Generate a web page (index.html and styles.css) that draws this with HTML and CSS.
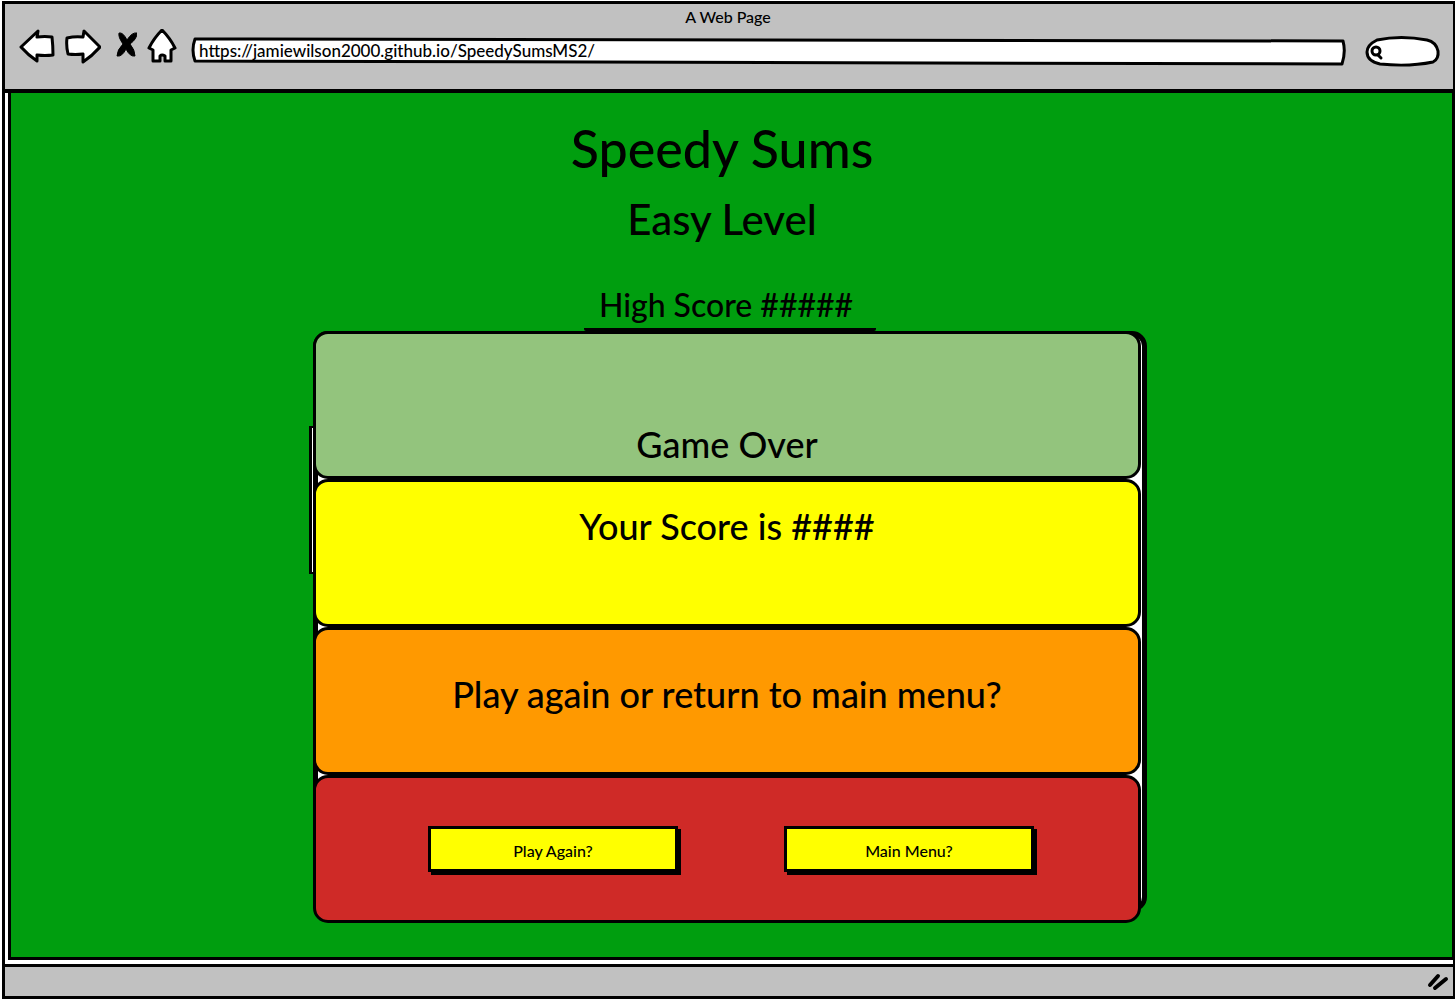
FILE: index.html
```html
<!DOCTYPE html>
<html lang="en">
<head>
<meta charset="utf-8">
<meta name="viewport" content="width=device-width, initial-scale=1">
<title>A Web Page</title>
<link rel="stylesheet" href="styles.css">
</head>
<body>
<div class="window">
  <header class="chrome">
    <div class="chrome-title">A Web Page</div>
    <div class="toolbar">
      <nav class="nav" aria-label="Browser">
        <button class="tool" type="button" aria-label="Back"><svg width="36" height="36" viewBox="0 0 36 36"><path class="ink" d="M2 18 19 2 18 8Q26 7 33 8Q34 17 34 26Q26 27 18 26L18 32Q9 26 2 18Z"/></svg></button>
        <button class="tool" type="button" aria-label="Forward"><svg width="36" height="36" viewBox="0 0 36 36"><path class="ink" d="M35 18 19 2 18 8Q10 7 2 9Q1 17 3 25Q10 26 18 25L18 33Q27 27 35 18Z"/></svg></button>
        <button class="tool tool-stop" type="button" aria-label="Stop"><svg width="22" height="36" viewBox="0 0 22 36"><path d="M4 4Q8 3 12 11Q17 3 22 4Q22 10 15 15Q20 21 20 27Q15 28 11 20Q7 28 2 27Q2 21 8 15Q3 8 4 4Z" stroke="#000" stroke-linejoin="round"/></svg></button>
        <button class="tool" type="button" aria-label="Home"><svg width="30" height="36" viewBox="0 0 30 36"><path class="ink" d="M15 1Q23 9 28 19L24 21 24 32 18 32 18 27Q15 25 13 27L13 32 6 32 6 21 2 19Q7 9 15 1Z"/></svg></button>
      </nav>
      <label class="field address">
        <svg class="field-shape" viewBox="0 0 1154 28" preserveAspectRatio="none" aria-hidden="true"><path class="ink" d="M4 2Q500 1 1152 4Q1155 15 1151 27Q500 26 4 24Q0 13 4 2Z"/></svg>
        <input class="field-input" type="text" aria-label="Address" value="https://jamiewilson2000.github.io/SpeedySumsMS2/">
      </label>
      <label class="field search">
        <svg class="field-shape" viewBox="0 0 74 30" preserveAspectRatio="none" aria-hidden="true"><path class="ink" d="M12 4Q36 -1 62 4Q71 6 73 15Q74 23 68 26Q44 31 15 28Q2 25 2 16Q2 9 12 4Z"/></svg>
        <svg class="search-icon" width="14" height="16" viewBox="0 0 14 16" aria-hidden="true"><circle class="ink" cx="6" cy="6" r="4"/><path class="ink" d="M8 10 11 13"/></svg>
        <input class="field-input" type="search" aria-label="Search">
      </label>
    </div>
  </header>

  <main class="page">
    <div class="headings">
      <h1 class="title">Speedy Sums</h1>
      <h2 class="level">Easy Level</h2>
      <p class="high-score">High Score #####</p>
    </div>
    <div class="board">
      <section class="card card-over"><p>Game Over</p></section>
      <section class="card card-score"><p>Your Score is ####</p></section>
      <section class="card card-prompt"><p>Play again or return to main menu?</p></section>
      <section class="card card-actions">
        <button class="action" type="button">Play Again?</button>
        <button class="action" type="button">Main Menu?</button>
      </section>
    </div>
  </main>

  <footer class="status">
    <svg class="grip" width="22" height="18" viewBox="0 0 22 18" aria-hidden="true"><path d="M3 12 11 3M8 15 19 6"/></svg>
  </footer>
</div>
</body>
</html>
```
FILE: styles.css
```css
*, *::before, *::after { box-sizing: border-box; }

body {
  margin: 0;
  background: #fff;
  color: #000;
  font-family: Lato, "Liberation Sans", sans-serif;
  font-weight: 500;
}

h1, h2, p { margin: 0; font-weight: 500; }

.window {
  display: flex;
  flex-direction: column;
  min-height: calc(100vh - 3px);
  margin: 1px 0 2px 2px;
  border: 3px solid #000;
  border-right-width: 2px;
}

/* Browser chrome */
.chrome {
  height: 89px;
  padding-right: 14px;
  background: #c1c1c1;
  border-bottom: 4px solid #000;
}

.chrome-title {
  height: 24px;
  padding-left: 12px;
  font-size: 16px;
  line-height: 26px;
  text-align: center;
}

.toolbar {
  display: flex;
  align-items: center;
  gap: 20px;
  height: 38px;
  padding-left: 14px;
}

.nav { display: flex; gap: 10px; width: 156px; }

.tool {
  display: flex;
  padding: 0;
  border: 0;
  background: none;
}

.tool-stop { margin-left: 4px; }

.ink {
  fill: #fff;
  stroke: #000;
  stroke-width: 3px;
  stroke-linejoin: round;
  stroke-linecap: round;
  vector-effect: non-scaling-stroke;
}

.field { position: relative; display: flex; margin-top: 8px; }
.nav + .field { margin-left: -4px; }
.address { flex: 1; height: 28px; }
.search { width: 74px; height: 30px; }

.field-shape {
  position: absolute;
  inset: 0;
  width: 100%;
  height: 100%;
  overflow: visible;
}

.search-icon { position: absolute; left: 5px; top: 9px; }

.field-input {
  position: relative;
  width: 100%;
  padding: 0 8px 2px;
  border: 0;
  background: none;
  color: #000;
  font: inherit;
  font-size: 17px;
  outline: 0;
}

.search .field-input { padding-left: 22px; }

/* Game page */
.page {
  flex: 1;
  margin: 0 0 4px 3px;
  padding: 26px 3px 34px 0;
  background: #009e0f;
  border: 3px solid #000;
  border-width: 0 1px 3px 3px;
}

.headings {
  display: flex;
  flex-direction: column;
  align-items: center;
  text-align: center;
}

.title { padding-right: 16px; font-size: 52px; line-height: 58px; }
.level { padding-right: 16px; margin-top: 12px; font-size: 42px; line-height: 60px; }

.high-score {
  width: 292px;
  margin-top: 33px;
  padding-right: 8px;
  border-bottom: 3px solid #000;
  border-radius: 2px;
  font-size: 32px;
  line-height: 46px;
}

.board {
  position: relative;
  display: grid;
  width: 58%;
  margin: 0 auto;
  padding-right: 6px;
}

.board::before {
  content: "";
  position: absolute;
  inset: 0 0 11px;
  background: #fff;
  border: 5px solid #000;
  border-radius: 15px;
}

.board::after {
  content: "";
  position: absolute;
  left: -4px;
  top: 95px;
  width: 5px;
  height: 148px;
  background: #fff;
  border: solid #000;
  border-width: 2px 1px 2px 3px;
}

.card {
  position: relative;
  display: flex;
  justify-content: center;
  height: 148px;
  border: 3px solid #000;
  border-radius: 15px;
  font-size: 36px;
  line-height: 44px;
}

.card-over { align-items: flex-end; padding-bottom: 10px; background: #93c47d; }
.card-score { padding-top: 22px; background: #ff0; }
.card-prompt { align-items: center; padding-bottom: 14px; background: #ff9900; }
.card-actions { align-items: center; gap: 106px; padding-left: 8px; background: #cf2a27; }

.action {
  width: 250px;
  height: 46px;
  padding: 0 0 6px;
  border: 3px solid #000;
  background: #ff0;
  box-shadow: 3px 3px #000;
  color: #000;
  font: inherit;
  font-size: 16px;
}

/* Status bar */
.status {
  display: flex;
  align-items: center;
  justify-content: flex-end;
  height: 32px;
  padding-right: 4px;
  background: #c1c1c1;
  border-top: 3px solid #000;
}

.grip { stroke: #000; stroke-width: 4px; stroke-linecap: round; }
```
